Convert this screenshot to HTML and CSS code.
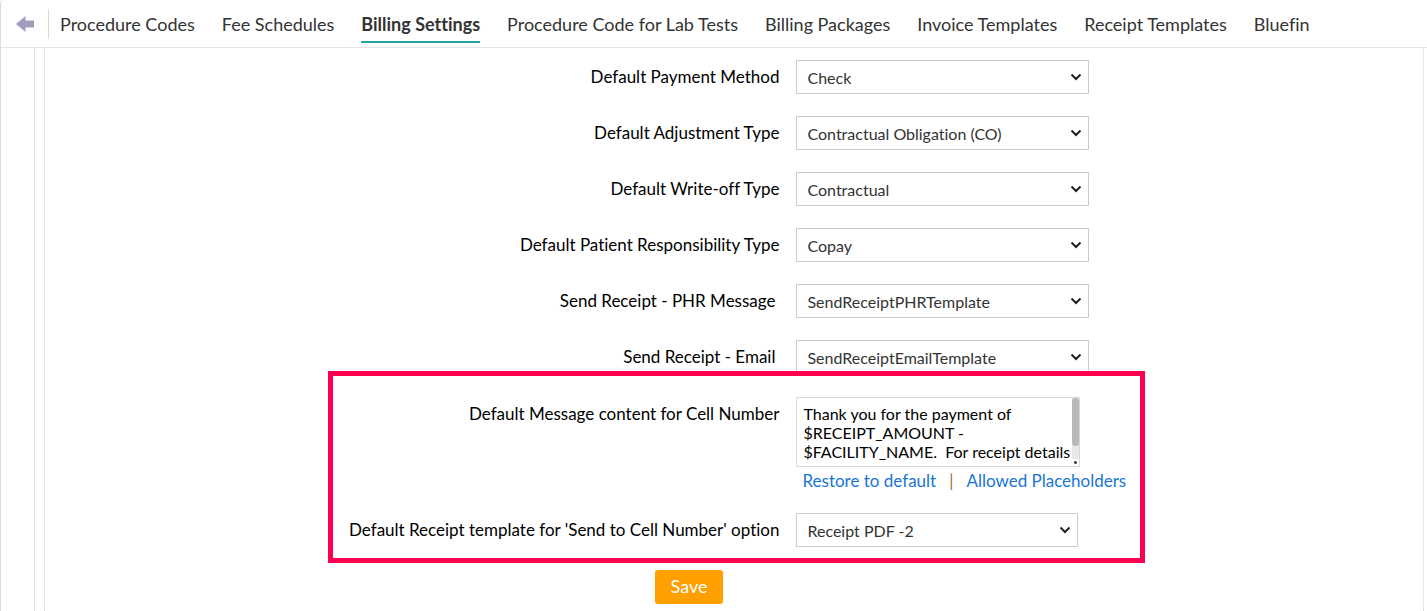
FILE: index.html
```html
<!DOCTYPE html>
<html lang="en">
<head>
<meta charset="utf-8">
<meta name="viewport" content="width=device-width, initial-scale=1">
<title>Billing Settings</title>
<link rel="stylesheet" href="styles.css">
</head>
<body>
<header class="topbar">
  <button class="back" type="button" aria-label="Back">
    <svg width="18" height="16" viewBox="0 0 18 16" aria-hidden="true"><path d="M0 8 L9.500 0 V4.500 H18 V11.500 H9.500 V16 Z" fill="#a29bbd"/></svg>
  </button>
  <nav class="tabs">
    <a href="#">Procedure Codes</a>
    <a href="#">Fee Schedules</a>
    <a href="#" class="active" aria-current="page">Billing Settings</a>
    <a href="#">Procedure Code for Lab Tests</a>
    <a href="#">Billing Packages</a>
    <a href="#">Invoice Templates</a>
    <a href="#">Receipt Templates</a>
    <a href="#">Bluefin</a>
  </nav>
</header>
<div class="body">
  <div class="rail"></div>
  <main class="content">
    <form class="form">
      <div class="row">
        <label for="payment">Default Payment Method</label>
        <div class="picker"><select id="payment"><option>Check</option></select><svg class="chevron" viewBox="0 0 12 8" aria-hidden="true"><path d="M1.500 1.500 L6 6 L10.500 1.500"/></svg></div>
      </div>
      <div class="row">
        <label for="adjustment">Default Adjustment Type</label>
        <div class="picker"><select id="adjustment"><option>Contractual Obligation (CO)</option></select><svg class="chevron" viewBox="0 0 12 8" aria-hidden="true"><path d="M1.500 1.500 L6 6 L10.500 1.500"/></svg></div>
      </div>
      <div class="row">
        <label for="writeoff">Default Write-off Type</label>
        <div class="picker"><select id="writeoff"><option>Contractual</option></select><svg class="chevron" viewBox="0 0 12 8" aria-hidden="true"><path d="M1.500 1.500 L6 6 L10.500 1.500"/></svg></div>
      </div>
      <div class="row">
        <label for="responsibility">Default Patient Responsibility Type</label>
        <div class="picker"><select id="responsibility"><option>Copay</option></select><svg class="chevron" viewBox="0 0 12 8" aria-hidden="true"><path d="M1.500 1.500 L6 6 L10.500 1.500"/></svg></div>
      </div>
      <div class="row">
        <label for="phr" class="inset">Send Receipt - PHR Message</label>
        <div class="picker"><select id="phr"><option>SendReceiptPHRTemplate</option></select><svg class="chevron" viewBox="0 0 12 8" aria-hidden="true"><path d="M1.500 1.500 L6 6 L10.500 1.500"/></svg></div>
      </div>
      <div class="row">
        <label for="email" class="inset">Send Receipt - Email</label>
        <div class="picker"><select id="email"><option>SendReceiptEmailTemplate</option></select><svg class="chevron" viewBox="0 0 12 8" aria-hidden="true"><path d="M1.500 1.500 L6 6 L10.500 1.500"/></svg></div>
      </div>
      <div class="cell-group">
        <div class="row">
          <label for="message">Default Message content for Cell Number</label>
          <div class="message">
            <div class="message-box">
              <textarea id="message">Thank you for the payment of $RECEIPT_AMOUNT - $FACILITY_NAME.  For receipt details
</textarea>
              <span class="scrollbar" aria-hidden="true"><span class="thumb"></span><span class="grip"></span></span>
            </div>
            <div class="links"><a href="#">Restore to default</a><span class="bar">|</span><a href="#">Allowed Placeholders</a></div>
          </div>
        </div>
        <div class="row">
          <label for="template">Default Receipt template for 'Send to Cell Number' option</label>
          <div class="picker narrow"><select id="template"><option>Receipt PDF -2</option></select><svg class="chevron" viewBox="0 0 12 8" aria-hidden="true"><path d="M1.500 1.500 L6 6 L10.500 1.500"/></svg></div>
        </div>
      </div>
      <div class="actions"><button class="save" type="submit">Save</button></div>
    </form>
  </main>
</div>
</body>
</html>
```

FILE: styles.css
```css
*, *::after { box-sizing: border-box; }

body {
  margin: 0;
  min-height: 100vh;
  display: flex;
  flex-direction: column;
  overflow: hidden;
  background: #fff;
  border-left: 1px solid #dcdcdc;
  border-top-left-radius: 4px;
  color: #000;
  font-family: Lato, "Open Sans", sans-serif;
  font-size: 16px;
  font-variant-ligatures: none;
}

.topbar {
  height: 48px;
  display: flex;
  align-items: center;
  border-bottom: 1px solid #e3e3e3;
}

.back {
  height: 30px;
  padding: 0 14px 0 15px;
  display: flex;
  align-items: center;
  background: none;
  border: 0;
  border-right: 1px solid #d9d9d9;
}

.tabs {
  display: flex;
  gap: 27px;
  padding-left: 11px;
  font-size: 18px;
  line-height: 22px;
}

.tabs a {
  padding: 8px 0 6px;
  border-bottom: 2px solid transparent;
  color: #333;
  text-decoration: none;
  white-space: nowrap;
}

.tabs .active {
  border-bottom-color: #26a5a8;
  font-weight: 700;
}

.body {
  flex: 1;
  display: flex;
}

.rail {
  width: 34px;
  border-right: 1px solid #e3e3e3;
}

.content {
  flex: 1;
  margin: 0 3px 0 9px;
  border: 1px dotted #d0d0d0;
  border-width: 0 1px;
}

.form {
  padding-top: 12px;
}

.row {
  display: grid;
  grid-template-columns: 27fr 23fr;
  column-gap: 16px;
  margin-bottom: 22px;
}

.row label {
  padding: 6px 1px 0 0;
  line-height: 22px;
  font-size: 17px;
  text-align: right;
}

.row .inset { padding-right: 5px; }

.picker {
  position: relative;
  width: 293px;
}

.narrow { width: 282px; }

.picker select {
  display: block;
  width: 100%;
  height: 34px;
  padding: 0 30px 0 10px;
  appearance: none;
  background: #fff;
  border: 1px solid #ccc;
  border-radius: 0;
  color: #333;
  font: inherit;
  font-variant-ligatures: none;
}

.chevron {
  position: absolute;
  top: 13px;
  right: 7px;
  width: 12px;
  height: 8px;
  fill: none;
  stroke: #222;
  stroke-width: 2;
  pointer-events: none;
}

.cell-group {
  position: relative;
  padding-top: 1px;
}

.cell-group::after {
  content: "";
  position: absolute;
  top: -25px;
  bottom: -16px;
  left: 5px;
  right: 0;
  width: 817px;
  margin: 0 auto;
  border: 5px solid #ff0051;
  pointer-events: none;
}

.message-box {
  position: relative;
  width: 284px;
}

.message textarea {
  display: block;
  width: 100%;
  height: 70px;
  padding: 6px;
  border: 1px solid #d8d8d8;
  resize: none;
  overflow: hidden;
  color: #000;
  font: inherit;
  font-variant-ligatures: none;
  line-height: 19px;
}

.scrollbar {
  position: absolute;
  top: 1px;
  right: 1px;
  bottom: 1px;
  width: 7px;
  display: flex;
  flex-direction: column;
  justify-content: space-between;
  background: #e8e8e8;
}

.thumb {
  height: 48px;
  background: #b8b8b8;
  border-radius: 4px;
}

.grip {
  height: 7px;
  background: #fff radial-gradient(circle, #444 1px, #fff 2px);
}

.links {
  display: flex;
  gap: 13px;
  padding: 3px 0 0 6px;
  font-size: 17px;
  line-height: 22px;
}

.links a { color: #1976d2; text-decoration: none; }
.bar { color: #a8662a; }

.cell-group .row:last-child {
  margin-top: -1px;
  margin-bottom: 0;
}

.actions {
  display: flex;
  justify-content: center;
  padding: 23px 90px 0 0;
}

.save {
  width: 68px;
  height: 34px;
  padding: 0 0 2px;
  background: #ffa000;
  border: 0;
  border-radius: 3px;
  color: #fff;
  font: inherit;
  font-size: 18px;
}
```
